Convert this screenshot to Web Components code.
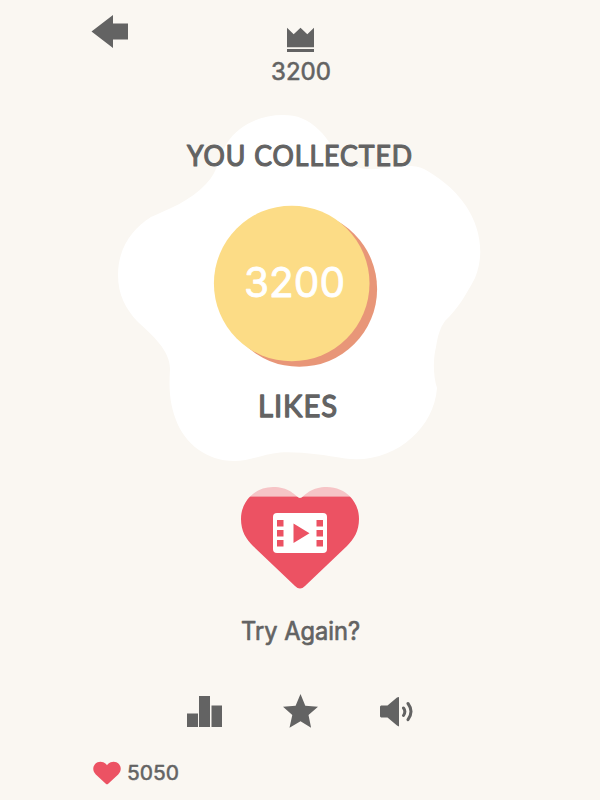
<!DOCTYPE html>
<html lang="en">
<head>
<meta charset="utf-8">
<title>Likes</title>
<style>
  body {
    margin: 0;
    background: #faf7f2;
    color: #636363;
    font-family: Lato, "Liberation Sans", sans-serif;
  }
</style>
</head>
<body>
<game-over score="3200" best="3200" hearts="5050"></game-over>

<script>
// A line of text with rounded corners, fitted to a given width
class RoundLabel extends HTMLElement {
  constructor() {
    super();
    this.attachShadow({ mode: "open" });
  }

  connectedCallback() {
    const width = this.getAttribute("width");
    const size = Number(this.getAttribute("size"));
    const height = Math.round(size * 1.2);
    const base = Math.round(size * 0.95);
    const stroke = this.getAttribute("stroke") || 0.5;
    this.shadowRoot.innerHTML = `
      <style>
        :host { display: block; width: ${width}px; height: ${height}px; }
        svg { display: block; overflow: visible; }
        text {
          fill: currentColor;
          stroke: currentColor;
          stroke-linejoin: round;
          stroke-width: ${stroke}px;
          font-size: ${size}px;
          letter-spacing: ${this.getAttribute("spacing") || 0}px;
        }
      </style>
      <svg width="${width}" height="${height}">
        <text x="0" y="${base}" textLength="${width}" lengthAdjust="spacingAndGlyphs"></text>
      </svg>`;
    this.shadowRoot.querySelector("text").textContent = this.getAttribute("text");
  }
}
customElements.define("round-label", RoundLabel);

const icons = {
  back: [37, 34, `<path d="M.5 16.500 22 0V8.500H37V24.500H22V33Z"/>`],
  crown: [28, 26, `<path d="M1 .7 7.700 7.300 14.500 .7 21.300 7.300 28 .7V20.300H1ZM1 22H28V25H1Z"/>`],
  chart: [36, 32, `<path d="M0 17.500H11V31H0ZM12 0H23V31H12ZM24.500 9.500H35V31H24.500Z"/>`],
  star: [36, 35, `<path d="M17.500 0 22.300 11.800 35 12.800 25.500 21 28.100 33.800 17.500 27.200 6.500 33.800 9.300 21 0 12.800 12.600 11.800Z"/>`],
  sound: [34, 30, `<path d="M0 9.500 1 8.500H7.500L17 .5 19 0V29.500L17 28.500 7.500 20.500H1L0 19.500Z"/>
    <path d="M23.500 11Q26.200 14.500 23.500 18.500M28 6.500Q34 14.500 28 22.700" fill="none" stroke="currentColor" stroke-width="3" stroke-linecap="round"/>`],
  heart: [28, 24, `<path fill="#ec5263" d="M14 4.200C10.600-.5 4.800-.2 2.100 3.100-.6 6.300-.3 10.400 2.800 13.500L12.800 22.800Q14 23.800 15.200 22.800L25.200 13.500C28.300 10.400 28.600 6.300 25.900 3.100 23.200-.2 17.400-.5 14 4.200Z"/>`],
};

class GameIcon extends HTMLElement {
  constructor() {
    super();
    this.attachShadow({ mode: "open" });
  }

  connectedCallback() {
    const [w, h, shape] = icons[this.getAttribute("name")];
    this.shadowRoot.innerHTML = `
      <style>
        :host { display: block; width: ${w}px; height: ${h}px; }
        svg { display: block; fill: currentColor; }
      </style>
      <svg width="${w}" height="${h}">${shape}</svg>`;
  }
}
customElements.define("game-icon", GameIcon);

// Fried egg, its labels come in through the slot
const eggTemplate = document.createElement("template");
eggTemplate.innerHTML = `
  <style>
    :host { display: grid; width: 364px; height: 348px; }
    svg, .content { grid-area: 1 / 1; }
    svg { display: block; }
    .content {
      display: flex;
      flex-direction: column;
      align-items: center;
    }
  </style>
  <svg width="364" height="348" viewBox="118 114 364 348">
    <path fill="#fff" d="M283 115C260 115 239 125 227 143C218 157 219 171 206 184C190 201 169 209 151 217C132 229 118 248 118 275C118 295 126 309 137 321C152 335 170 350 170 369C169 386 169 402 176 420C185 444 207 461 234 461C251 461 263 454 280 452.500C302 451.500 323 455 345 458.500C392 465 434 430 437 388C433 375 433 360 436 347C438 335 440 328 445 321C458 309 467 293 475 278C485 254 480 227 466 206C453 187 438 177 424 169C416 165 404 165 389 167C373 171 355 170 343 160C333 151 329 139 319 130C308 119 297 115 283 115Z"/>
    <circle cx="299.300" cy="289" r="77.800" fill="#e89678"/>
    <circle cx="291.700" cy="283.500" r="77.800" fill="#fcdc86"/>
  </svg>
  <div class="content"><slot></slot></div>
`;

class EggPanel extends HTMLElement {
  constructor() {
    super();
    this.attachShadow({ mode: "open" });
    this.shadowRoot.appendChild(eggTemplate.content.cloneNode(true));
  }
}
customElements.define("egg-panel", EggPanel);

const videoTemplate = document.createElement("template");
videoTemplate.innerHTML = `
  <style>
    :host { display: block; }
    svg { display: block; }
  </style>
  <svg width="118" height="102" viewBox="241 487 118 102">
    <defs>
      <clipPath id="top"><path d="M241 487H359V496.500H241Z"/></clipPath>
      <clipPath id="rest"><path d="M241 496.500H359V589H241Z"/></clipPath>
      <path id="heart" d="M300 498C304 498 308 487 327 487C345 487 359 501 359 519C359 531 354 539 347 546L305 586Q300 591 295 586L253 546C246 539 241 531 241 519C241 501 255 487 273 487C292 487 296 498 300 498Z"/>
    </defs>
    <use href="#heart" clip-path="url(#top)" fill="#f6c4c6"/>
    <use href="#heart" clip-path="url(#rest)" fill="#ec5263"/>
    <rect x="273" y="513" width="54" height="40" rx="4" fill="#fff"/>
    <path fill="#ec5263" d="M277 520h6.500v6.500H277ZM277 530h6.500v6.500H277ZM277 540h6.500v6.500H277ZM316.500 520h6.500v6.500H316.500ZM316.500 530h6.500v6.500H316.500ZM316.500 540h6.500v6.500H316.500ZM293.500 523.500 309.500 533.200 293.500 543Z"/>
  </svg>
`;

class VideoHeart extends HTMLElement {
  constructor() {
    super();
    this.attachShadow({ mode: "open" });
    this.shadowRoot.appendChild(videoTemplate.content.cloneNode(true));
  }
}
customElements.define("video-heart", VideoHeart);

class GameOver extends HTMLElement {
  constructor() {
    super();
    this.attachShadow({ mode: "open" });
  }

  connectedCallback() {
    const score = this.getAttribute("score");
    this.shadowRoot.innerHTML = `
      <style>
        :host {
          display: flex;
          flex-direction: column;
          align-items: center;
          box-sizing: border-box;
          width: 600px;
          height: 800px;
          overflow: hidden;
        }
        header {
          display: grid;
          grid-template-columns: 180px 58px 180px;
          align-items: start;
          width: 418px;
          height: 99px;
          padding-top: 15px;
        }
        .best { display: flex; flex-direction: column; align-items: center; padding-top: 12px; gap: 4px; }
        .best round-label { margin-left: 2px; }
        .number, .again { font-family: Inter, "Liberation Sans", sans-serif; }
        .collected { margin: 25px 0 0 0; }
        .score { color: #fff; margin: 85px 0 0 -12px; }
        .likes { margin: 81px 0 0 -4px; }
        video-heart { margin-top: 25px; }
        .again { margin-top: 27px; }
        nav { display: flex; align-items: flex-start; justify-content: space-between; width: 227px; margin-top: 48px; height: 36px; }
        nav game-icon:nth-child(3) { margin-top: 3px; }
        nav game-icon:nth-child(1) { margin-top: 2px; }
        footer { display: flex; align-items: center; gap: 6px; width: 415px; margin-top: 31px; }
      </style>
      <header>
        <game-icon name="back"></game-icon>
        <div class="best">
          <game-icon name="crown"></game-icon>
          <round-label class="number" text="${this.getAttribute("best")}" size="24" width="60" stroke="0.6"></round-label>
        </div>
      </header>
      <egg-panel>
        <round-label class="collected" text="YOU COLLECTED" size="28" width="226" spacing="1" stroke="1.2"></round-label>
        <round-label class="number score" text="${score}" size="41" width="101" stroke="0.8"></round-label>
        <round-label class="likes" text="LIKES" size="31" width="80" spacing="1" stroke="1.3"></round-label>
      </egg-panel>
      <video-heart></video-heart>
      <round-label class="again" text="Try Again?" size="25" width="119" stroke="0.7"></round-label>
      <nav>
        <game-icon name="chart"></game-icon>
        <game-icon name="star"></game-icon>
        <game-icon name="sound"></game-icon>
      </nav>
      <footer>
        <game-icon name="heart"></game-icon>
        <round-label class="number" text="${this.getAttribute("hearts")}" size="20" width="52" stroke="0.5"></round-label>
      </footer>`;
  }
}
customElements.define("game-over", GameOver);
</script>
</body>
</html>
